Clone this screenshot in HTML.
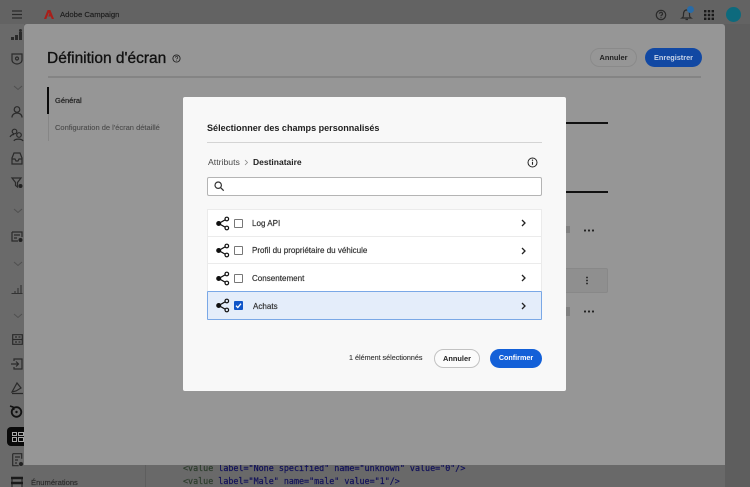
<!DOCTYPE html>
<html><head><meta charset="utf-8">
<style>
*{box-sizing:border-box}
html,body{margin:0;padding:0;width:750px;height:487px;overflow:hidden;background:#5f5f5f;font-family:"Liberation Sans",sans-serif}
.a{position:absolute;white-space:nowrap}
svg{position:absolute;overflow:visible}
.s{fill:none;stroke:#2a2a2a;stroke-width:1.2}
.share{left:216px;width:14px;height:13px}
.cb{position:absolute;left:234px;width:9px;height:9px;border:1px solid #777;border-radius:1px;background:#fff}
.row{position:absolute;left:207px;width:335px;background:#fff;border-bottom:1px solid #ebebeb}
.t{position:absolute;left:252px;font-size:8.050px;color:#2c2c2c;white-space:nowrap;-webkit-text-stroke:.15px #2c2c2c}
.ch{left:521px;width:6px;height:8px}
</style></head><body>
<div class="a" style="left:0;top:0;width:750px;height:24px;background:#636363"></div>
<div class="a" style="left:0;top:24px;width:24px;height:463px;background:#6a6a6a"></div>
<div class="a" style="left:725px;top:24px;width:25px;height:463px;background:#5e5e5e"></div>
<div class="a" style="left:24px;top:465px;width:701px;height:22px;background:#696969"></div>
<div class="a" style="left:145px;top:465px;width:1px;height:22px;background:#5e5e5e"></div>

<!-- top bar -->
<svg style="left:12px;top:10px" width="12" height="10"><path class="s" d="M0 1h10M0 4.500h10M0 8h10"/></svg>
<svg style="left:44px;top:9.500px" width="10" height="9"><path d="M3.600 0h2.800L10 9H7.800L6.800 6.500H4.200L5.400 3.600 4.900 2.600 2.300 9H0z" fill="#a81f1a"/></svg>
<div class="a" style="left:60px;top:10px;font-size:7.700px;color:#1c1c1c;-webkit-text-stroke:.15px #1c1c1c">Adobe Campaign</div>
<svg style="left:655px;top:9px" width="12" height="12"><circle cx="6" cy="6" r="4.700" class="s"/><path class="s" d="M4.500 4.700a1.500 1.500 0 1 1 2 1.500c-.4.200-.5.500-.5 1M6 8.200v1" stroke-width="1"/></svg>
<svg style="left:680px;top:7px" width="14" height="14"><path class="s" d="M2 11c1.500-1 1.500-2 1.500-4s1-4 3-4 3 2 3 4 0 3 1.500 4z"/><path class="s" d="M5.500 12.500h2.500"/></svg>
<div class="a" style="left:687px;top:6px;width:7px;height:7px;border-radius:50%;background:#2a6ba5"></div>
<svg style="left:704px;top:10px" width="10" height="10" fill="#1a1a1a"><rect width="2.400" height="2.400"/><rect x="3.800" width="2.400" height="2.400"/><rect x="7.600" width="2.400" height="2.400"/><rect y="3.800" width="2.400" height="2.400"/><rect x="3.800" y="3.800" width="2.400" height="2.400"/><rect x="7.600" y="3.800" width="2.400" height="2.400"/><rect y="7.600" width="2.400" height="2.400"/><rect x="3.800" y="7.600" width="2.400" height="2.400"/><rect x="7.600" y="7.600" width="2.400" height="2.400"/></svg>
<div class="a" style="left:725.500px;top:7px;width:15px;height:15px;border-radius:50%;background:#0d6a7d"></div>

<!-- sidebar icons -->
<svg style="left:11px;top:29px" width="12" height="12" fill="#2a2a2a"><rect x="0" y="8" width="3" height="3"/><rect x="4" y="6" width="3" height="5"/><rect x="8" y="3" width="3" height="8"/><circle cx="9.500" cy="1.500" r="1.500"/></svg>
<svg style="left:11px;top:53px" width="12" height="12"><path class="s" d="M1 1h10v6c0 2.500-3 4-5 4S1 9.500 1 7z"/><circle cx="6" cy="5.500" r="1.500" class="s"/></svg>
<svg style="left:13px;top:85px" width="10" height="6"><path d="M1 1l4 3.500L9 1" fill="none" stroke="#505050" stroke-width="1"/></svg>
<svg style="left:11px;top:106px" width="12" height="12"><circle cx="6" cy="3.500" r="2.800" class="s"/><path class="s" d="M1 11.500c0-6 10-6 10 0"/></svg>
<svg style="left:10px;top:128px" width="13" height="13"><circle cx="4.500" cy="3.500" r="2.300" class="s"/><circle cx="9" cy="7" r="2.300" class="s"/><path class="s" d="M0 9c1-2 3-2.500 4-2.500M4 13c.5-2.500 8-2.500 9 0"/></svg>
<svg style="left:11px;top:152px" width="12" height="13"><path class="s" d="M3 1h6l2 5v6H1V6z"/><path class="s" d="M1 7h3l1 2h2l1-2h3"/></svg>
<svg style="left:11px;top:177px" width="12" height="12"><path class="s" d="M1 1h9L6.500 5.500V10L4.500 8.500v-3z"/><circle cx="9.500" cy="9" r="2" fill="#222"/></svg>
<svg style="left:13px;top:208px" width="10" height="6"><path d="M1 1l4 3.500L9 1" fill="none" stroke="#505050" stroke-width="1"/></svg>
<svg style="left:11px;top:231px" width="12" height="12"><path class="s" d="M1 1h10v5M1 1v9h6M3 4h6M3 7h3"/><circle cx="9.500" cy="9" r="2" fill="#222"/></svg>
<svg style="left:13px;top:261px" width="10" height="6"><path d="M1 1l4 3.500L9 1" fill="none" stroke="#505050" stroke-width="1"/></svg>
<svg style="left:11px;top:284px" width="12" height="10"><path d="M.5 9.500h11M4 9V7M7 9V4M10 9V1" fill="none" stroke="#333" stroke-width="1.100"/></svg>
<svg style="left:13px;top:313px" width="10" height="6"><path d="M1 1l4 3.500L9 1" fill="none" stroke="#505050" stroke-width="1"/></svg>
<svg style="left:12px;top:334px" width="11" height="12"><path class="s" d="M.7.700h9.600v9.600H.7zM.7 5.500h9.600M3 3h2M6.500 3h2M3 8h2M6.500 8h2" stroke-width="1.100"/></svg>
<svg style="left:11px;top:358px" width="12" height="12"><path class="s" d="M3 3V1h8v10H3V9M0 6h7M5 3.500L7.500 6 5 8.500"/></svg>
<svg style="left:11px;top:382px" width="12" height="12"><path class="s" d="M1 10L6 1l4 5-5 3zM1 11.500h11"/></svg>
<svg style="left:10px;top:405px" width="13" height="13"><circle cx="6.500" cy="7" r="4.800" fill="none" stroke="#111" stroke-width="1.800"/><circle cx="6.500" cy="7" r="1.200" fill="#111"/><path d="M0 1l3 1 1 3" fill="none" stroke="#111" stroke-width="1.500"/></svg>
<div class="a" style="left:7px;top:427px;width:20px;height:19px;background:#0a0a0a;border-radius:4px 0 0 4px"></div>
<svg style="left:12px;top:432px" width="12" height="10"><path d="M.5.500h4v3h-4zM.5 5.500h4v4h-4zM6.500.5h5v3h-5zM6.500 5.500h5v4h-5z" fill="none" stroke="#aaa" stroke-width="1"/></svg>
<svg style="left:12px;top:453px" width="12" height="14"><path class="s" d="M.7.700h9v5M.7.700v12h6M3 4h5M3 7h3M3 10h2"/><circle cx="9" cy="11" r="2" fill="#222"/></svg>
<svg style="left:11px;top:477px" width="12" height="10" fill="none"><path d="M0 1h12M0 6h12" stroke="#1a1a1a" stroke-width="2.500"/><path d="M1 2v8M11 2v8" stroke="#1a1a1a"/></svg>
<div class="a" style="left:31px;top:478px;font-size:7.600px;color:#2a2a2a;-webkit-text-stroke:.15px #2a2a2a">Énumérations</div>
<div class="a" style="left:183px;top:462px;font:8.400px/12.600px 'DejaVu Sans Mono','Liberation Mono',monospace;color:#10105a;-webkit-text-stroke:.2px #10105a"><span style="color:#2c3c2c;-webkit-text-stroke:.2px #2c3c2c">&lt;value</span> label="None specified" name="unknown" value="0"/&gt;<br><span style="color:#2c3c2c;-webkit-text-stroke:.2px #2c3c2c">&lt;value</span> label="Male" name="male" value="1"/&gt;</div>

<!-- panel -->
<div class="a" style="left:24px;top:24px;width:701px;height:441px;background:#969696;border-radius:3px 3px 0 0"></div>
<div class="a" style="left:47px;top:50px;font-size:15.500px;color:#111;-webkit-text-stroke:.35px #111">Définition d'écran</div>
<svg style="left:172px;top:54px" width="9" height="9"><circle cx="4.500" cy="4.500" r="3.600" fill="none" stroke="#222" stroke-width=".9"/><path d="M3.300 3.600a1.200 1.200 0 1 1 1.700 1.100c-.3.200-.4.300-.4.700M4.500 6.300v.6" fill="none" stroke="#222" stroke-width=".7"/></svg>
<div class="a" style="left:48px;top:76px;width:653px;height:2px;background:#848484"></div>
<div class="a" style="left:590px;top:48px;width:47px;height:19px;border-radius:10px;border:1px solid #8a8a8a;text-align:center;font:bold 7.400px/17px 'Liberation Sans',sans-serif;color:#222">Annuler</div>
<div class="a" style="left:645px;top:48px;width:57px;height:19px;border-radius:10px;background:#1148a3;text-align:center;font:bold 7.300px/19px 'Liberation Sans',sans-serif;color:#c8d4e8">Enregistrer</div>
<div class="a" style="left:47px;top:87px;width:2px;height:27px;background:#0a0a0a"></div>
<div class="a" style="left:48px;top:114px;width:1px;height:27px;background:#868686"></div>
<div class="a" style="left:55px;top:96px;font-size:7.500px;color:#222;-webkit-text-stroke:.2px #222">Général</div>
<div class="a" style="left:55px;top:123px;font-size:7.500px;color:#4a4a4a;-webkit-text-stroke:.1px #4a4a4a">Configuration de l'écran détaillé</div>
<div class="a" style="left:566px;top:122px;width:42px;height:2px;background:#111"></div>
<div class="a" style="left:566px;top:191px;width:42px;height:2px;background:#111"></div>
<div class="a" style="left:566px;top:268px;width:42px;height:25px;background:#8f8f8f;border:1px solid #888;border-left:0;border-radius:0 2px 2px 0"></div>
<div class="a" style="left:586px;top:276px;width:2px;height:9px;background:radial-gradient(circle,#333 1px,transparent 1px) 0 0/2px 3px"></div>
<div class="a" style="left:583px;top:229px;width:11px;height:3px;background:radial-gradient(circle,#222 1px,transparent 1.200px) 0 0/4px 3px"></div>
<div class="a" style="left:583px;top:310px;width:11px;height:3px;background:radial-gradient(circle,#222 1px,transparent 1.200px) 0 0/4px 3px"></div>
<div class="a" style="left:566px;top:226px;width:4px;height:7px;background:#808080"></div>
<div class="a" style="left:566px;top:307px;width:4px;height:9px;background:#808080"></div>

<!-- modal -->
<div class="a" style="left:183px;top:97px;width:383px;height:294px;background:#f8f8f8;border-radius:2px"></div>
<div class="a" style="left:207px;top:123px;font-size:9.050px;font-weight:bold;color:#222">Sélectionner des champs personnalisés</div>
<div class="a" style="left:207px;top:142px;width:335px;height:1px;background:#d4d4d4"></div>
<div class="a" style="left:208px;top:157px;font-size:8.700px;color:#4a4a4a">Attributs</div>
<svg style="left:244px;top:159px" width="5" height="7"><path d="M1 1l2.500 2.500L1 6" fill="none" stroke="#888" stroke-width=".8"/></svg>
<div class="a" style="left:253px;top:157px;font-size:8.500px;font-weight:bold;color:#222">Destinataire</div>
<svg style="left:527px;top:157px" width="11" height="11"><circle cx="5.500" cy="5.500" r="4.500" fill="none" stroke="#222" stroke-width="1"/><path d="M5.500 4.800v3" stroke="#222" stroke-width="1.100"/><circle cx="5.500" cy="3.200" r=".7" fill="#222"/></svg>
<div class="a" style="left:207px;top:177px;width:335px;height:19px;background:#fff;border:1px solid #b4b4b4;border-radius:2px"></div>
<svg style="left:214px;top:181px" width="11" height="11"><circle cx="4.200" cy="4.200" r="3.200" fill="none" stroke="#333" stroke-width="1.200"/><path d="M6.700 6.700l3 3" stroke="#333" stroke-width="1.300"/></svg>

<div class="row" style="top:209px;height:28px;border-top:1px solid #ebebeb;border-left:1px solid #ebebeb;border-right:1px solid #ebebeb"></div>
<div class="row" style="top:237px;height:27px;border-left:1px solid #ebebeb;border-right:1px solid #ebebeb"></div>
<div class="row" style="top:264px;height:28px;border-left:1px solid #ebebeb;border-right:1px solid #ebebeb"></div>
<div class="row" style="top:291px;height:29px;background:#e4edfa;border:1px solid #7aa8e6;border-radius:1px"></div>

<svg class="share" style="top:217px" viewBox="0 0 14 13"><circle cx="2.700" cy="6.500" r="2.500" fill="#111"/><circle cx="10.800" cy="2" r="1.800" fill="none" stroke="#111" stroke-width="1.200"/><circle cx="10.800" cy="11" r="1.800" fill="none" stroke="#111" stroke-width="1.200"/><path d="M2.700 6.500L9.200 2.800M2.700 6.500L9.200 10.200" stroke="#111" stroke-width="1.200"/></svg>
<svg class="share" style="top:244px" viewBox="0 0 14 13"><circle cx="2.700" cy="6.500" r="2.500" fill="#111"/><circle cx="10.800" cy="2" r="1.800" fill="none" stroke="#111" stroke-width="1.200"/><circle cx="10.800" cy="11" r="1.800" fill="none" stroke="#111" stroke-width="1.200"/><path d="M2.700 6.500L9.200 2.800M2.700 6.500L9.200 10.200" stroke="#111" stroke-width="1.200"/></svg>
<svg class="share" style="top:272px" viewBox="0 0 14 13"><circle cx="2.700" cy="6.500" r="2.500" fill="#111"/><circle cx="10.800" cy="2" r="1.800" fill="none" stroke="#111" stroke-width="1.200"/><circle cx="10.800" cy="11" r="1.800" fill="none" stroke="#111" stroke-width="1.200"/><path d="M2.700 6.500L9.200 2.800M2.700 6.500L9.200 10.200" stroke="#111" stroke-width="1.200"/></svg>
<svg class="share" style="top:299px" viewBox="0 0 14 13"><circle cx="2.700" cy="6.500" r="2.500" fill="#111"/><circle cx="10.800" cy="2" r="1.800" fill="none" stroke="#111" stroke-width="1.200"/><circle cx="10.800" cy="11" r="1.800" fill="none" stroke="#111" stroke-width="1.200"/><path d="M2.700 6.500L9.200 2.800M2.700 6.500L9.200 10.200" stroke="#111" stroke-width="1.200"/></svg>

<div class="cb" style="top:219px"></div>
<div class="cb" style="top:246px"></div>
<div class="cb" style="top:274px"></div>
<svg style="left:234px;top:301px" width="9" height="9"><rect width="9" height="9" rx="1" fill="#0f55c8"/><path d="M2 4.700l1.800 1.800L7 2.700" fill="none" stroke="#fff" stroke-width="1.300"/></svg>

<div class="t" style="top:218.500px">Log API</div>
<div class="t" style="top:245.500px">Profil du propriétaire du véhicule</div>
<div class="t" style="top:273.500px">Consentement</div>
<div class="t" style="top:301.500px;left:253px">Achats</div>

<svg class="ch" style="top:219px"><path d="M1 1l3 3-3 3" fill="none" stroke="#222" stroke-width="1.300"/></svg>
<svg class="ch" style="top:247px"><path d="M1 1l3 3-3 3" fill="none" stroke="#222" stroke-width="1.300"/></svg>
<svg class="ch" style="top:274px"><path d="M1 1l3 3-3 3" fill="none" stroke="#222" stroke-width="1.300"/></svg>
<svg class="ch" style="top:302px"><path d="M1 1l3 3-3 3" fill="none" stroke="#222" stroke-width="1.300"/></svg>

<div class="a" style="left:349px;top:353px;font-size:7.200px;color:#333;-webkit-text-stroke:.12px #333">1 élément sélectionnés</div>
<div class="a" style="left:434px;top:349px;width:46px;height:19px;border-radius:10px;border:1px solid #c2c2c2;background:#fbfbfb;text-align:center;font:bold 7.400px/17px 'Liberation Sans',sans-serif;color:#222">Annuler</div>
<div class="a" style="left:490px;top:349px;width:52px;height:19px;border-radius:10px;background:#1360d8;text-align:center;font:bold 7.200px/18px 'Liberation Sans',sans-serif;color:#fff">Confirmer</div>
</body></html>
